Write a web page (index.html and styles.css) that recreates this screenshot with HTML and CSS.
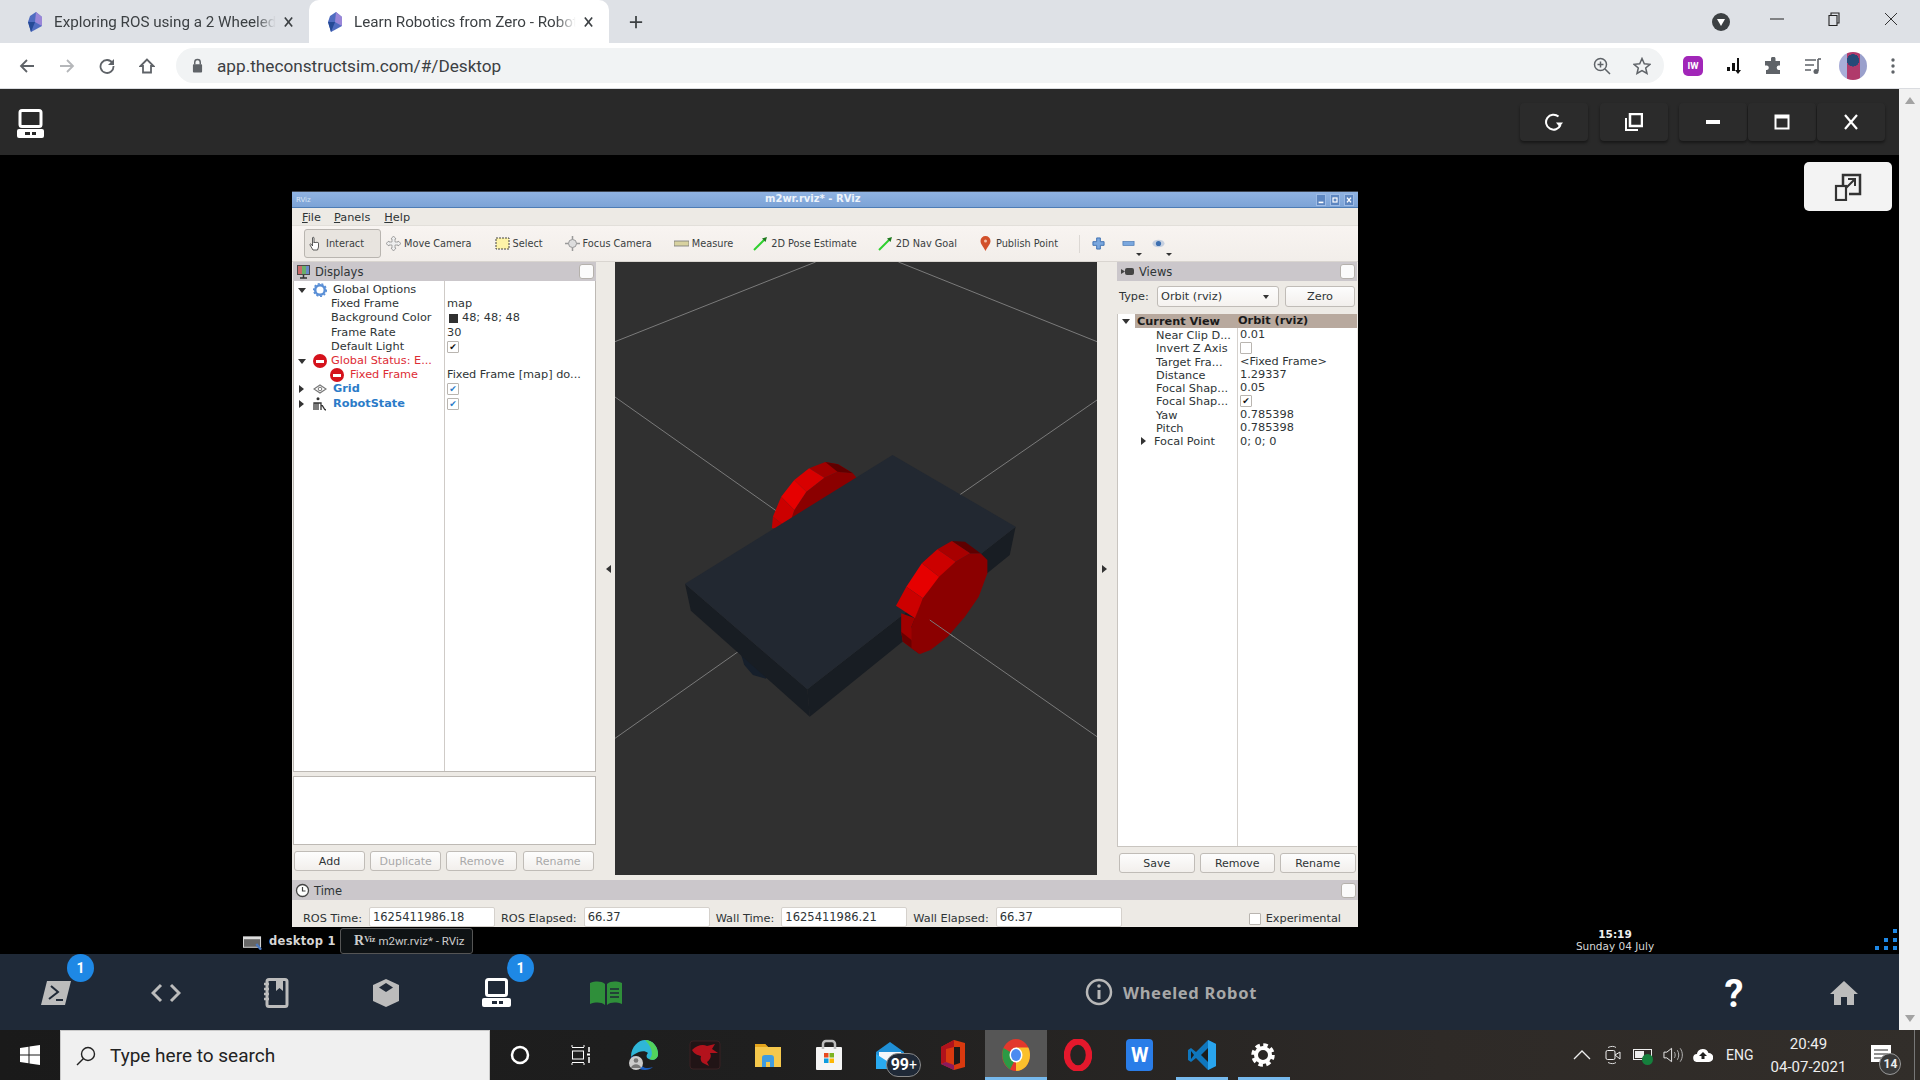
FILE: index.html
```html
<!DOCTYPE html>
<html lang="en">
<head>
<meta charset="utf-8">
<title>Learn Robotics from Zero</title>
<link rel="stylesheet" href="styles.css">
</head>
<body>
<div class="page">
  <header class="tabstrip">
    <div class="tab">
      <svg class="favicon" viewBox="0 0 20 20"><polygon points="11,0 17,5 17,14 6,20 3,10 5,4" fill="#4f6cc0"/><polygon points="11,0 17,5 17,14 10,10" fill="#9a86d8"/><polygon points="3,10 10,10 6,20" fill="#254a96"/></svg>
      <span class="tab-title">Exploring ROS using a 2 Wheeled</span>
      <svg class="tab-x" viewBox="0 0 12 12"><path d="M2 1l8 10M10 1L2 11" stroke="#3c4043" stroke-width="1.8" fill="none"/></svg>
    </div>
    <div class="tab tab-active">
      <svg class="favicon" viewBox="0 0 20 20"><polygon points="11,0 17,5 17,14 6,20 3,10 5,4" fill="#4f6cc0"/><polygon points="11,0 17,5 17,14 10,10" fill="#9a86d8"/><polygon points="3,10 10,10 6,20" fill="#254a96"/></svg>
      <span class="tab-title">Learn Robotics from Zero - Robot</span>
      <svg class="tab-x" viewBox="0 0 12 12"><path d="M2 1l8 10M10 1L2 11" stroke="#3c4043" stroke-width="1.8" fill="none"/></svg>
    </div>
    <svg class="newtab" viewBox="0 0 16 16"><path d="M8 1v14M1 8h14" stroke="#3c4043" stroke-width="2"/></svg>
    <div class="win-controls">
      <svg class="win-drop" viewBox="0 0 18 18"><circle cx="9" cy="9" r="9" fill="#3c4043"/><path d="M5 6h8l-4 7z" fill="#fff"/></svg>
      <svg class="win-btn win-min" viewBox="0 0 14 14"><path d="M0 7h14" stroke="#222" stroke-width="1"/></svg>
      <svg class="win-btn" viewBox="0 0 14 14"><path d="M3 3.5h8v10H3zM5 3.500V1h8v10h-2" stroke="#222" stroke-width="1.100" fill="none"/></svg>
      <svg class="win-btn" viewBox="0 0 14 14"><path d="M1 1l12 12M13 1L1 13" stroke="#333" stroke-width="1"/></svg>
    </div>
  </header>

  <nav class="navbar">
    <span class="nav-slot"><svg class="ic16" viewBox="0 0 16 16"><path d="M15 8H2M8 2L2 8l6 6" stroke="#5f6368" stroke-width="1.800" fill="none"/></svg></span>
    <span class="nav-slot"><svg class="ic16" viewBox="0 0 16 16"><path d="M1 8h13M8 2l6 6-6 6" stroke="#b5b7ba" stroke-width="1.800" fill="none"/></svg></span>
    <span class="nav-slot"><svg class="ic16" viewBox="0 0 16 16"><path d="M13.500 5A6.500 6.500 0 1 0 14.500 8" stroke="#5f6368" stroke-width="1.800" fill="none"/><path d="M15 1v6H9z" fill="#5f6368"/></svg></span>
    <span class="nav-slot"><svg class="ic16" viewBox="0 0 16 16"><path d="M8 1.500L1.500 8H4v6.500h8V8h2.500z" stroke="#5f6368" stroke-width="1.800" fill="none"/></svg></span>
    <div class="omnibox">
      <svg class="lock" viewBox="0 0 12 16"><path d="M3 7V4.500a3 3 0 0 1 6 0V7" stroke="#5f6368" stroke-width="1.600" fill="none"/><rect x="1" y="6.500" width="10" height="9" rx="1" fill="#5f6368"/></svg>
      <span class="url">app.theconstructsim.com/#/Desktop</span>
      <span class="nav-slot push"><svg class="ic18" viewBox="0 0 18 18"><circle cx="7.500" cy="7.500" r="6" stroke="#5f6368" stroke-width="1.500" fill="none"/><path d="M12 12l5 5M7.500 4.500v6M4.500 7.500h6" stroke="#5f6368" stroke-width="1.500"/></svg></span>
      <span class="nav-slot"><svg class="ic18" viewBox="0 0 18 18"><path d="M9 1.500l2.300 5.200 5.700.6-4.300 3.700 1.300 5.500L9 13.600l-5 2.900 1.300-5.500L1 7.300l5.700-.6z" stroke="#5f6368" stroke-width="1.500" fill="none"/></svg></span>
    </div>
    <div class="ext-group">
      <span class="nav-slot"><span class="iw">IW</span></span>
      <span class="nav-slot"><svg class="ic18" viewBox="0 0 18 18"><path d="M3 10h3v4H3zM8 6h3v8H8z" fill="#111"/><path d="M14 1v14" stroke="#111" stroke-width="2"/><path d="M11 13h6l-3 4z" fill="#111"/></svg></span>
      <span class="nav-slot"><svg class="ic18" viewBox="0 0 18 18"><path d="M7 1.500a2.300 2.300 0 0 1 4.500 0V4h4.500v4.500h-1.500a2.300 2.300 0 0 0 0 4.500H16v4H2v-4h1a2.300 2.300 0 0 0 0-4.500H1V4h6z" fill="#5f6368"/></svg></span>
      <span class="nav-slot"><svg class="ic18" viewBox="0 0 18 18"><path d="M1 3h11M1 8h9M1 13h6" stroke="#5f6368" stroke-width="1.600"/><path d="M14 2v12" stroke="#5f6368" stroke-width="1.600"/><path d="M14 2h3" stroke="#5f6368" stroke-width="1.600"/><circle cx="12" cy="14.500" r="2.500" fill="#5f6368"/></svg></span>
      <span class="nav-slot"><span class="avatar"></span></span>
      <span class="nav-slot"><svg class="ic18" viewBox="0 0 18 18"><circle cx="9" cy="3" r="1.700" fill="#5f6368"/><circle cx="9" cy="9" r="1.700" fill="#5f6368"/><circle cx="9" cy="15" r="1.700" fill="#5f6368"/></svg></span>
    </div>
  </nav>

  <div class="app">
    <div class="app-main">
      <div class="darkbar">
        <svg class="desk-logo" viewBox="0 0 29 29"><rect x="4" y="1.500" width="21" height="16" rx="2" stroke="#fff" stroke-width="3" fill="#292929"/><rect x="1" y="20" width="27" height="9" rx="2" fill="#fff"/><rect x="9" y="23" width="11" height="3" fill="#292929"/><path d="M14 23h2v3h-2z" fill="#fff"/></svg>
        <div class="wm-buttons">
          <button class="wm-btn wm-a"><svg class="ic18" viewBox="0 0 18 18"><path d="M13.500 3.500A7.500 7.500 0 1 0 15.500 12" stroke="#fff" stroke-width="2" fill="none"/><path d="M11 9.500h7l-3.500 4.500z" fill="#fff"/></svg></button>
          <button class="wm-btn wm-b"><svg class="ic18" viewBox="0 0 18 18"><path d="M1 5v12h12" stroke="#fff" stroke-width="2" fill="none"/><rect x="5" y="1" width="12" height="12" stroke="#fff" stroke-width="2.500" fill="none"/></svg></button>
          <button class="wm-btn wm-c"><svg class="ic18" viewBox="0 0 18 18"><rect x="2" y="7" width="14" height="4" fill="#fff"/></svg></button>
          <button class="wm-btn wm-d"><svg class="ic18" viewBox="0 0 18 18"><rect x="2.500" y="2.500" width="13" height="13" stroke="#fff" stroke-width="2" fill="none"/><rect x="2" y="2" width="14" height="3.500" fill="#fff"/></svg></button>
          <button class="wm-btn wm-d"><svg class="ic18" viewBox="0 0 18 18"><path d="M3 2l12 14M15 2L3 16" stroke="#fff" stroke-width="2.200"/></svg></button>
        </div>
      </div>

      <div class="desktop">
        <section class="rviz">
          <div class="rv-title">
            <span class="rv-title-ic">RViz</span>
            <span class="rv-title-text">m2wr.rviz* - RViz</span>
            <span class="rv-title-btns">
              <span class="rv-tbtn"><svg viewBox="0 0 10 12"><path d="M2 9h6" stroke="#fff" stroke-width="2"/></svg></span>
              <span class="rv-tbtn"><svg viewBox="0 0 10 12"><rect x="2.500" y="3.500" width="5" height="5" stroke="#fff" stroke-width="1.500" fill="none"/></svg></span>
              <span class="rv-tbtn"><svg viewBox="0 0 10 12"><path d="M2.500 3l5 6M7.500 3l-5 6" stroke="#fff" stroke-width="1.800"/></svg></span>
            </span>
          </div>
          <div class="rv-menu">
            <span class="rv-m1"><u>F</u>ile</span><span class="rv-m2"><u>P</u>anels</span><span class="rv-m3"><u>H</u>elp</span>
          </div>
          <div class="rv-tools">
            <span class="tool tool-on"><svg class="t-ic" viewBox="0 0 15 15"><path d="M5 14L2 9c-.5-1 1-1.500 1.500-.5L4.500 10V2c0-1 1.500-1 1.500 0v5c0-1 1.500-1 1.500 0 0-1 1.500-1 1.500 0 0-.8 1.500-.8 1.500.2V11l-1 3z" fill="#fff" stroke="#333" stroke-width=".8"/></svg>Interact</span>
            <span class="tool t-move"><svg class="t-ic" viewBox="0 0 15 15"><path d="M7.500 0l2.500 3H9v3h3V5l3 2.500L12 10V9H9v3h1l-2.500 3L5 12h1V9H3v1L0 7.500 3 5v1h3V3H5z" fill="#eee" stroke="#888" stroke-width=".7"/></svg>Move Camera</span>
            <span class="tool t-select"><svg class="t-ic" viewBox="0 0 15 15"><rect x="1" y="2" width="13" height="11" fill="#fdf3a8" stroke="#444" stroke-width="1" stroke-dasharray="2 1"/></svg>Select</span>
            <span class="tool t-focus"><svg class="t-ic" viewBox="0 0 15 15"><path d="M7.500 0v15M0 7.500h15" stroke="#999" stroke-width="1.500"/><circle cx="7.500" cy="7.500" r="4" fill="#ddd" stroke="#999"/></svg>Focus Camera</span>
            <span class="tool t-measure"><svg class="t-ic" viewBox="0 0 15 15"><rect x="0" y="5" width="15" height="5" fill="#d8d2a0" stroke="#777" stroke-width=".8"/></svg>Measure</span>
            <span class="tool t-pose"><svg class="t-ic" viewBox="0 0 15 15"><path d="M1 14L11 4" stroke="#2fd02f" stroke-width="2"/><path d="M14 1l-5 1.500L12.500 6z" fill="#1d7a1d"/></svg>2D Pose Estimate</span>
            <span class="tool t-nav"><svg class="t-ic" viewBox="0 0 15 15"><path d="M1 14L11 4" stroke="#2fd02f" stroke-width="2"/><path d="M14 1l-5 1.500L12.500 6z" fill="#1d7a1d"/></svg>2D Nav Goal</span>
            <span class="tool t-pub"><svg class="t-ic" viewBox="0 0 15 15"><path d="M7.500 15C5 10 2.500 8 2.500 5a5 5 0 0 1 10 0c0 3-2.500 5-5 10z" fill="#d2502a"/><circle cx="7.500" cy="5" r="1.500" fill="#f3c0a8"/></svg>Publish Point</span>
            <span class="tool-sep"></span>
            <svg class="t-plus" viewBox="0 0 14 14"><path d="M5 1h4v4h4v4H9v4H5V9H1V5h4z" fill="#7aa7de" stroke="#3d6fb0"/></svg>
            <span class="t-drop"><svg class="t-minus" viewBox="0 0 14 14"><rect x="1" y="5" width="12" height="4" fill="#7aa7de" stroke="#3d6fb0" stroke-width=".7"/></svg><i class="caret"></i></span>
            <span class="t-drop"><svg class="t-eye" viewBox="0 0 14 14"><ellipse cx="7" cy="7" rx="6.500" ry="4" fill="#c6d0e0"/><circle cx="7" cy="7" r="2.800" fill="#3d6fb0"/></svg><i class="caret"></i></span>
          </div>

          <div class="rv-main">
            <div class="rv-left">
              <div class="dock-head">
                <svg class="head-ic" viewBox="0 0 15 15"><rect x="1" y="1" width="13" height="10" fill="#4a4a4a"/><rect x="2" y="2" width="4" height="8" fill="#c86a6a"/><rect x="6" y="2" width="4" height="8" fill="#6ab06a"/><rect x="10" y="2" width="3" height="8" fill="#6a8ac8"/><path d="M4 14h7M7.500 11v3" stroke="#333" stroke-width="1.500"/></svg>
                <span>Displays</span>
                <span class="float-btn"></span>
              </div>
              <div class="tree">
                <div class="row"><div class="name"><i class="arr-d"></i><svg class="tree-ic" viewBox="0 0 14 14"><circle cx="7" cy="7" r="4.800" fill="none" stroke="#5a8fd6" stroke-width="2.500"/><circle cx="7" cy="7" r="6.300" fill="none" stroke="#5a8fd6" stroke-width="1.500" stroke-dasharray="2 1.800"/></svg><span class="lab-g">Global Options</span></div><div class="val"></div></div>
                <div class="row"><div class="name child">Fixed Frame</div><div class="val">map</div></div>
                <div class="row"><div class="name child">Background Color</div><div class="val"><i class="swatch"></i>48; 48; 48</div></div>
                <div class="row"><div class="name child">Frame Rate</div><div class="val">30</div></div>
                <div class="row"><div class="name child">Default Light</div><div class="val"><span class="cb">✔</span></div></div>
                <div class="row err"><div class="name"><i class="arr-d"></i><span class="stop s-top"></span><span class="lab-g">Global Status: E...</span></div><div class="val"></div></div>
                <div class="row err"><div class="name child2"><span class="stop s-sub"></span><span>Fixed Frame</span></div><div class="val dark">Fixed Frame [map] do...</div></div>
                <div class="row"><div class="name"><i class="arr-r"></i><svg class="tree-ic" viewBox="0 0 14 14"><path d="M7 3l6 4-6 4-6-4z" fill="none" stroke="#777" stroke-width="1.200"/><circle cx="7" cy="7" r="1.800" fill="none" stroke="#777"/></svg><b class="lab-g blue">Grid</b></div><div class="val"><span class="cb cb-blue">✔</span></div></div>
                <div class="row"><div class="name"><i class="arr-r"></i><svg class="tree-ic" viewBox="0 0 14 14"><circle cx="5" cy="1.800" r="1.500" fill="#333"/><path d="M1 13V6h7v7M3 6v7M5 6v7M8 8c3 0 2 5 5 5" stroke="#333" stroke-width="1.300" fill="none"/></svg><b class="lab-g blue">RobotState</b></div><div class="val"><span class="cb cb-blue">✔</span></div></div>
              </div>
              <div class="desc"></div>
              <div class="btn-row">
                <button class="qbtn">Add</button><button class="qbtn off">Duplicate</button><button class="qbtn off">Remove</button><button class="qbtn off">Rename</button>
              </div>
            </div>
            <div class="sash"><i class="sash-l"></i></div>
            <div class="viewport">
              <svg class="scene" viewBox="45 -414 1398 1839" preserveAspectRatio="none">
                <g class="grid-lines">
                  <line x1="45" y1="-175" x2="627" y2="-414"/><line x1="867" y1="-414" x2="1443" y2="-175"/>
                  <line x1="45" y1="-9" x2="512" y2="332"/><line x1="1040" y1="288" x2="1443" y2="0"/>
                  <line x1="45" y1="1015" x2="420" y2="742"/><line x1="958" y1="660" x2="1443" y2="1010"/>
                </g>
                <polygon points="408,755 420,795 445,825 482,836 505,815" fill="#161f2b"/>
                <polygon points="757,248 735,220 690,215 652,233 600,275 565,330 547,387" fill="#8b0000"/>
                <polygon points="655,186 692,193 735,220 690,215 652,233 608,205" fill="#a00000"/>
                <polygon points="655,186 692,193 735,220 690,215" fill="#5e0000"/>
                <polygon points="608,205 652,233 600,275 565,240" fill="#d80000"/>
                <polygon points="565,240 600,275 565,330 527,290" fill="#e60000"/>
                <polygon points="527,290 565,330 547,387 503,350" fill="#cc0000"/>
                <polygon points="503,350 547,387 500,385" fill="#c00000"/>
                <polygon points="248,551 603,868 610,950 265,632" fill="#181d23"/>
                <polygon points="603,868 1207,380 1190,465 610,950" fill="#181d23"/>
                <polygon points="850,165 1207,380 603,868 248,551" fill="#222831"/>
                <polygon points="905,680 915,655 875,640 875,695 880,725 928,762" fill="#a00000"/>
                <polygon points="875,695 905,720 928,762 880,725" fill="#6b0000"/>
                <polygon points="1105,460 1125,480 1125,520 1100,590 1060,650 1010,710 960,750 930,762 905,745 905,680 930,610 975,535 1033,485 1075,460" fill="#8b0000"/>
                <polygon points="1022,423 1060,425 1105,460 1075,460" fill="#5e0000"/>
                <polygon points="980,448 1022,423 1075,460 1033,485" fill="#a80000"/>
                <polygon points="935,490 980,448 1033,485 985,530" fill="#cc0000"/>
                <polygon points="890,560 935,490 985,530 938,595" fill="#e60000"/>
                <polygon points="860,617 890,560 938,595 915,655" fill="#cc0000"/>
                <line class="grid-over" x1="958" y1="660" x2="1030" y2="712"/>
              </svg>
            </div>
            <div class="sash sash-r"><i class="sash-a"></i></div>
            <div class="rv-right">
              <div class="dock-head">
                <svg class="head-ic" viewBox="0 0 15 15"><path d="M1 5l4 2.500L1 10z" fill="#444"/><rect x="5" y="4" width="9" height="7" rx="2" fill="#444"/></svg>
                <span>Views</span>
                <span class="float-btn"></span>
              </div>
              <div class="type-row">
                <span class="type-lab">Type:</span>
                <span class="combo"><span>Orbit (rviz)</span><i class="combo-arr"></i></span>
                <button class="qbtn zero">Zero</button>
              </div>
              <div class="vtable">
                <div class="vhead"><i class="arr-d v-arr"></i><div class="vhead-band"><b class="vname">Current View</b><b class="vval">Orbit (rviz)</b></div></div>
                <div class="vrow"><div class="vname">Near Clip D...</div><div class="vval">0.01</div></div>
                <div class="vrow"><div class="vname">Invert Z Axis</div><div class="vval"><span class="cb"></span></div></div>
                <div class="vrow"><div class="vname">Target Fra...</div><div class="vval">&lt;Fixed Frame&gt;</div></div>
                <div class="vrow"><div class="vname">Distance</div><div class="vval">1.29337</div></div>
                <div class="vrow"><div class="vname">Focal Shap...</div><div class="vval">0.05</div></div>
                <div class="vrow"><div class="vname">Focal Shap...</div><div class="vval"><span class="cb">✔</span></div></div>
                <div class="vrow"><div class="vname">Yaw</div><div class="vval">0.785398</div></div>
                <div class="vrow"><div class="vname">Pitch</div><div class="vval">0.785398</div></div>
                <div class="vrow"><div class="vname vfp"><i class="arr-r"></i>Focal Point</div><div class="vval">0; 0; 0</div></div>
              </div>
              <div class="btn-row btn-row-r">
                <button class="qbtn">Save</button><button class="qbtn">Remove</button><button class="qbtn">Rename</button>
              </div>
            </div>
          </div>

          <div class="time-head">
            <svg class="head-ic" viewBox="0 0 15 15"><circle cx="7.500" cy="7.500" r="6" fill="#fff" stroke="#444" stroke-width="1.300"/><path d="M7.500 4v4h3" stroke="#444" stroke-width="1.200" fill="none"/></svg>
            <span>Time</span>
            <span class="float-btn"></span>
          </div>
          <div class="time-row">
            <span class="t-lab">ROS Time:</span><span class="t-field">1625411986.18</span>
            <span class="t-lab">ROS Elapsed:</span><span class="t-field">66.37</span>
            <span class="t-lab">Wall Time:</span><span class="t-field">1625411986.21</span>
            <span class="t-lab">Wall Elapsed:</span><span class="t-field">66.37</span>
            <span class="t-exp"><span class="cb cb-plain"></span>Experimental</span>
          </div>
        </section>

        <button class="detach"><svg viewBox="0 0 28 28"><path d="M9 13V2h17v19H15" stroke="#333" stroke-width="2.500" fill="none"/><rect x="2" y="13" width="10" height="14" stroke="#333" stroke-width="2.200" fill="#f3f3f3"/><path d="M12 15l9-9M14 6h7v7" stroke="#333" stroke-width="2" fill="none"/></svg></button>

        <div class="x-task">
          <svg class="x-ic" viewBox="0 0 20 14"><rect x="0" y="0" width="19" height="12" fill="#ddd"/><rect x="1" y="3" width="17" height="8" fill="#666"/><path d="M14 8l5 6" stroke="#4a78c0" stroke-width="2.500"/></svg>
          <span class="x-desk">desktop 1</span>
          <span class="x-win"><span class="x-logo">R<small>Viz</small></span><span class="x-name">m2wr.rviz* - RViz</span></span>
        </div>
        <div class="x-clock"><b>15:19</b><span>Sunday 04 July</span></div>
        <div class="x-dots"><i></i><i></i><i></i><i></i><i></i><i></i></div>
      </div>

      <div class="dock">
        <div class="dock-apps">
          <span class="dock-slot"><svg class="d-term" viewBox="0 0 30 24"><path d="M6 0h24l-6 24H0z" fill="#bcbcbc"/><path d="M10 5l7 6-9 7M15 19h7" stroke="#1f2937" stroke-width="2" fill="none"/></svg><span class="badge">1</span></span>
          <span class="dock-slot"><svg class="d-code" viewBox="0 0 30 20"><path d="M10 2L2 10l8 8M20 2l8 8-8 8" stroke="#bcbcbc" stroke-width="3" fill="none"/></svg></span>
          <span class="dock-slot"><svg class="d-note" viewBox="0 0 26 30"><rect x="4" y="1.500" width="20" height="27" rx="2" stroke="#bcbcbc" stroke-width="3" fill="none"/><path d="M13 2h7v11l-3.500-3-3.500 3z" fill="#bcbcbc"/><path d="M1 6h5M1 11h5M1 16h5M1 21h5" stroke="#bcbcbc" stroke-width="2.500"/></svg></span>
          <span class="dock-slot"><svg class="d-cube" viewBox="0 0 26 28"><path d="M13 0l13 6v16l-13 6-13-6V6z" fill="#bcbcbc"/><path d="M13 4l7 4.500-7 4.500-7-4.500z" fill="#1f2937"/></svg></span>
          <span class="dock-slot"><svg class="d-desk" viewBox="0 0 29 29"><rect x="4.500" y="1.500" width="20" height="16" rx="2" stroke="#fff" stroke-width="3" fill="none"/><rect x="0" y="20" width="29" height="9" rx="2" fill="#fff"/><rect x="10" y="23" width="11" height="3" fill="#1f2937"/><path d="M15 23h2v3h-2z" fill="#fff"/></svg><span class="badge">1</span></span>
          <span class="dock-slot"><svg class="d-book" viewBox="0 0 32 24"><path d="M0 2c6-2 11-2 15 1v21C11 21 6 21 0 23zM32 2c-6-2-11-2-15 1v21c4-3 9-3 15-1z" fill="#2f8f3a"/><path d="M20 8h9M20 12h9M20 16h9" stroke="#1f2937" stroke-width="1.500"/></svg></span>
        </div>
        <div class="dock-label">
          <svg class="d-info" viewBox="0 0 28 28"><circle cx="14" cy="14" r="12" stroke="#b8b8b8" stroke-width="2.500" fill="none"/><path d="M14 12v9" stroke="#b8b8b8" stroke-width="3"/><circle cx="14" cy="8" r="1.800" fill="#b8b8b8"/></svg>
          <span>Wheeled Robot</span>
        </div>
        <div class="dock-right">
          <span class="dock-slot help">?</span>
          <span class="dock-slot"><svg class="d-home" viewBox="0 0 28 24"><path d="M14 0L0 13h4v11h7v-8h6v8h7V13h4z" fill="#bcbcbc"/></svg></span>
        </div>
      </div>
    </div>
    <aside class="vscroll"><i class="sc-up"></i><i class="sc-down"></i></aside>
  </div>

  <footer class="taskbar">
    <span class="start"><svg class="ic20" viewBox="0 0 20 20"><path d="M0 3l8.500-1.300V9.500H0zM9.500 1.500L20 0v9.500H9.500zM0 10.500h8.500v7.800L0 17zM9.500 10.500H20V20L9.500 18.500z" fill="#fff"/></svg></span>
    <div class="search">
      <svg class="s-ic" viewBox="0 0 20 20"><circle cx="12" cy="8" r="6.500" stroke="#222" stroke-width="1.400" fill="none"/><path d="M7.500 12.500L1 19" stroke="#222" stroke-width="1.400"/></svg>
      <span>Type here to search</span>
    </div>
    <div class="tb-apps">
      <span class="tb-slot"><svg class="ic20" viewBox="0 0 20 20"><circle cx="10" cy="10" r="8" stroke="#fff" stroke-width="2.500" fill="none"/></svg></span>
      <span class="tb-slot"><svg class="ic20 tv" viewBox="0 0 20 20"><path d="M1 2.500h12M1 17.500h12M13 20v-2M1 20v-2M13 0v2M1 0v2" stroke="#fff" stroke-width="1"/><rect x="1.500" y="6" width="11" height="8" stroke="#fff" fill="none"/><path d="M18 2v5M18 12v6" stroke="#fff" stroke-width="1.500"/><rect x="16" y="8.500" width="3" height="2" fill="#fff"/></svg></span>
      <span class="tb-slot"><svg class="ic32 edge" viewBox="0 0 32 32"><path d="M4 18C4 7 12 1 18 1c8 0 13 7 13 14 0 5-5 7-9 5-3-1-3-4-1-6-3-3-9-2-13 1-2 1-3 2-4 3z" fill="#2fb6d8"/><path d="M18 1c8 0 13 7 13 14 0 5-5 7-9 5 4-2 5-10-4-19z" fill="#52d35c"/><path d="M4 18c0 8 7 13 14 13 3 0 6-1 8-3-7 3-15 0-14-10-3-1-6-1-8 0z" fill="#1b5fc4"/><circle cx="9" cy="24" r="7" fill="#ccc"/><circle cx="9" cy="21.500" r="2.300" fill="#777"/><path d="M4 29c1-5 9-5 10 0z" fill="#777"/></svg></span>
      <span class="tb-slot"><svg class="ic32 edge" viewBox="0 0 32 32"><rect x="1" y="2" width="30" height="28" rx="3" fill="#211416" stroke="#3a2022"/><path d="M3 11c5-5 11-6 15-4l8-2-3 5 6 4-8 0c2 3 0 7-3 9l2 4-6-3c-2-1-3-4-2-7-3-1-6-1-9-6z" fill="#b3121c"/></svg></span>
      <span class="tb-slot"><svg class="ic28" viewBox="0 0 28 28"><path d="M1 3h10l3 3h13v20H1z" fill="#f5c84c"/><path d="M1 3h10l3 3H1z" fill="#e3a41c"/><path d="M8 26V17c0-2 1-3 3-3h6c2 0 3 1 3 3v9h-4v-5h-4v5z" fill="#3f9ce0"/></svg></span>
      <span class="tb-slot"><svg class="ic32" viewBox="0 0 32 32"><rect x="3" y="8" width="26" height="23" rx="1" fill="#f5f5f5"/><path d="M10 10V5a3 3 0 0 1 3-3h6a3 3 0 0 1 3 3v5" stroke="#bdbdbd" stroke-width="2.500" fill="none"/><rect x="11" y="14" width="4.500" height="4.500" fill="#e8491e"/><rect x="16.500" y="14" width="4.500" height="4.500" fill="#7db320"/><rect x="11" y="19.500" width="4.500" height="4.500" fill="#0c9ce0"/><rect x="16.500" y="19.500" width="4.500" height="4.500" fill="#fdb705"/></svg></span>
      <span class="tb-slot"><svg class="ic32" viewBox="0 0 32 32"><path d="M1 13L15 3l14 10v15H1z" fill="#1f8fd6"/><path d="M4 13h22v8l-11 6-11-6z" fill="#f2f6fa"/><path d="M1 15l14 9 14-9v15H1z" fill="#29aaf0"/></svg><span class="mail-count">99<small>+</small></span></span>
      <span class="tb-slot"><svg class="ic24" viewBox="0 0 24 30"><path d="M13 0l11 3v24l-11 3L0 24V7z" fill="#d8390f"/><path d="M13 0L0 7v17l5-2V9l8-2z" fill="#b0121c"/><path d="M0 24l13 6v-5l-8-3z" fill="#8c1a5c"/><path d="M13 7v18l6-2V7z" fill="#1c1a18"/></svg></span>
      <span class="tb-slot tb-active"><svg class="ic28" viewBox="0 0 28 32"><ellipse cx="14" cy="16" rx="14" ry="16" fill="#e2382c"/><path d="M14 32c8 0 14-7 14-16 0-3-.6-5-1.700-7.500H14z" fill="#fbc02d"/><path d="M1.500 9C-1 15 0 25 8 30.500L15 17z" fill="#2c9a45"/><ellipse cx="14" cy="16" rx="6.500" ry="7.500" fill="#fff"/><ellipse cx="14" cy="16" rx="5" ry="6" fill="#4c8bf0"/></svg></span>
      <span class="tb-slot"><svg class="ic28" viewBox="0 0 28 32"><ellipse cx="14" cy="16" rx="11" ry="13.500" stroke="#e4182c" stroke-width="6.500" fill="none"/></svg></span>
      <span class="tb-slot"><span class="wps">W</span></span>
      <span class="tb-slot tb-run"><svg class="ic28" viewBox="0 0 28 32"><path d="M20 1l8 4v22l-8 4L8 19l-5 4-3-2v-10l3-2 5 4z" fill="#0f76bd"/><path d="M20 1l8 4v22l-8 4z" fill="#29a4ee"/><path d="M20 9l-7 7 7 7z" fill="#1c1c1c"/><path d="M3 12l3 4-3 4z" fill="#1c1c1c"/></svg></span>
      <span class="tb-slot tb-run"><svg class="ic24 gear" viewBox="0 0 24 24"><circle cx="12" cy="12" r="7" stroke="#fff" stroke-width="4" fill="none"/><circle cx="12" cy="12" r="10" stroke="#fff" stroke-width="3.500" stroke-dasharray="4.500 3.350" fill="none"/></svg></span>
    </div>
    <div class="tray">
      <svg class="tr-chev" viewBox="0 0 18 10"><path d="M1 9l8-8 8 8" stroke="#eee" stroke-width="1.300" fill="none"/></svg>
      <svg class="tr-cam" viewBox="0 0 16 20"><path d="M3 2.500c3-1.500 6-1.500 8 0M3 17.500c3 1.500 6 1.500 8 0" stroke="#ddd" fill="none"/><rect x="1" y="5.500" width="9" height="9" rx="1.500" stroke="#eee" fill="none"/><path d="M10 10l5-3v7z" stroke="#eee" fill="none"/></svg>
      <span class="tr-bat"><svg viewBox="0 0 20 12"><rect x=".5" y=".5" width="18" height="10" stroke="#eee" fill="none"/><rect x="2" y="2" width="9" height="7" fill="#eee"/></svg><i></i></span>
      <svg class="tr-vol" viewBox="0 0 22 16"><path d="M1 5h3l5-4v14l-5-4H1z" stroke="#eee" fill="none"/><path d="M12 5c1 2 1 4 0 6M15 3c2 3 2 7 0 10M18 1c3 4 3 10 0 14" stroke="#bbb" fill="none"/></svg>
      <svg class="tr-cloud" viewBox="0 0 20 14"><path d="M4.500 14a4 4 0 0 1-.6-8A6 6 0 0 1 15.500 5 4.500 4.500 0 0 1 16 14z" fill="#fff"/><path d="M10 4l4 4h-2.500v3h-3V8H6z" fill="#1f1f1f"/></svg>
      <span class="tr-eng">ENG</span>
      <span class="tr-time"><span>20:49</span><span>04-07-2021</span></span>
      <span class="tr-note"><svg viewBox="0 0 20 17"><path d="M0 0h20v17H0z" fill="#fff"/><path d="M3 5h14M3 9h14M3 13h10" stroke="#222"/></svg><b>14</b></span>
    </div>
    <i class="show-desk"></i>
  </footer>
</div>
</body>
</html>
```

FILE: styles.css
```css
* { box-sizing: border-box; }
html, body { margin: 0; height: 100%; overflow: hidden; }
body { font-family: "Noto Sans", "Open Sans", sans-serif; background: #000; }
svg { display: block; flex: none; }
button { font: inherit; margin: 0; }
i { display: block; }
.page { width: 1920px; height: 1080px; display: flex; flex-direction: column; }

.ic16 { width: 16px; height: 16px; }
.ic18 { width: 18px; height: 18px; }
.ic20 { width: 20px; height: 20px; }
.ic24 { width: 24px; height: 30px; }
.ic28 { width: 28px; height: 32px; }
.ic32 { width: 32px; height: 32px; }

/* Browser chrome */
.tabstrip { height: 43px; background: #dee1e6; display: flex; align-items: center; padding-left: 9px; flex: none; }
.tab { width: 300px; height: 43px; display: flex; align-items: center; padding-left: 16px; font: 15.2px "Roboto", sans-serif; color: #3c4043; }
.tab-active { background: #fff; border-radius: 10px 10px 0 0; color: #3c4043; }
.favicon { width: 20px; height: 20px; margin-right: 9px; }
.tab-title { width: 224px; white-space: nowrap; -webkit-mask-image: linear-gradient(90deg, #000 90%, transparent 99%); mask-image: linear-gradient(90deg, #000 90%, transparent 99%); }
.tab-x { width: 11px; height: 12px; margin-left: 5px; }
.newtab { width: 14px; height: 14px; margin-left: 20px; }
.win-controls { margin-left: auto; display: flex; align-items: center; }
.win-drop { width: 18px; height: 18px; margin-right: 40px; }
.win-btn { width: 14px; height: 14px; margin-right: 44px; margin-top: -6px; }
.win-min { margin-right: 42px; }
.win-btn:last-child { margin-right: 22px; }

.navbar { height: 46px; background: #fff; border-bottom: 1px solid #dadce0; display: flex; align-items: flex-start; padding: 5px 0 0 7px; flex: none; }
.nav-slot { width: 40px; height: 35px; display: flex; align-items: center; justify-content: center; flex: none; }
.omnibox { width: 1488px; height: 35px; margin-left: 9px; background: #f1f3f4; border-radius: 18px; display: flex; align-items: center; padding: 0 2px 0 16px; }
.lock { width: 11px; height: 15px; margin-right: 14px; }
.url { font: 17.2px "Roboto", sans-serif; color: #3c4043; }
.push { margin-left: auto; }
.ext-group { display: flex; margin-left: 9px; }
.iw { width: 20px; height: 20px; border-radius: 5px; background: #a126b8; color: #fff; font: 700 9.5px/20px "Roboto", sans-serif; text-align: center; }
.avatar { width: 28px; height: 28px; border-radius: 50%; background: radial-gradient(circle at 50% 30%, #274a78 0 25%, transparent 26%), linear-gradient(90deg, #a9aed8 0 30%, #b03a6b 30% 75%, #9aa0cc 75%); }

/* App shell */
.app { height: 941px; display: flex; flex: none; }
.app-main { width: 1899px; display: flex; flex-direction: column; }
.vscroll { width: 21px; background: #f1f1f1; display: flex; flex-direction: column; justify-content: space-between; padding: 8px 0 8px 6px; }
.sc-up { width: 0; height: 0; border: 5px solid transparent; border-top: 0; border-bottom: 7px solid #a3a3a3; }
.sc-down { width: 0; height: 0; border: 5px solid transparent; border-bottom: 0; border-top: 7px solid #a3a3a3; }

.darkbar { height: 66px; background: #292929; display: flex; align-items: center; padding-left: 16px; flex: none; }
.desk-logo { width: 29px; height: 29px; margin-top: 3px; }
.wm-buttons { margin-left: auto; display: flex; padding-right: 14px; align-self: flex-start; margin-top: 14px; }
.wm-btn { width: 68px; height: 38px; border: 0; background: #2b2b2b; border-radius: 4px; box-shadow: 0 2px 3px rgba(0,0,0,.45); display: flex; align-items: center; justify-content: center; padding: 0; }
.wm-a { margin-right: 12px; } .wm-b { margin-right: 11px; } .wm-c, .wm-d { margin-right: 1px; }
.wm-d:last-child { margin-right: 0; }

.desktop { height: 799px; background: #000; position: relative; flex: none; }

/* RViz */
.rviz { position: absolute; left: 292px; top: 36px; width: 1066px; height: 736px; background: #edeae5; font: 11.3px "DejaVu Sans", sans-serif; color: #2e3436; display: flex; flex-direction: column; }
.rv-title { height: 17px; background: linear-gradient(#90b3e2, #7ca3d6); border-top: 1px solid #3d4450; border-bottom: 1px solid #4d7cb5; display: flex; align-items: center; position: relative; flex: none; }
.rv-title-ic { font-size: 7px; color: #dce7f5; margin-left: 4px; }
.rv-title-text { position: absolute; left: 473px; top: 0; font: 700 10px/14px "DejaVu Sans", sans-serif; color: #eef3fa; }
.rv-title-btns { margin-left: auto; display: flex; gap: 4px; padding-right: 4px; }
.rv-tbtn { width: 10px; height: 12px; background: #5d86c0; border: 1px solid #9dbbe5; display: block; }
.rv-tbtn svg { width: 8px; height: 10px; }
.rv-menu { height: 18px; display: flex; align-items: center; flex: none; border-bottom: 1px solid #e2dfda; padding-top: 1px; }
.rv-m1 { margin-left: 10px; } .rv-m2 { margin-left: 13px; } .rv-m3 { margin-left: 14px; }
.rv-tools { height: 36px; background: linear-gradient(#f8f4f1, #f2eeea); border-bottom: 1px solid #d9d5d0; display: flex; align-items: center; flex: none; padding-left: 12px; font-size: 9.75px; }
.tool { display: flex; align-items: center; white-space: nowrap; color: #3a3f41; }
.t-ic { width: 15px; height: 15px; margin-right: 3px; }
.tool-on { width: 77px; height: 29px; background: #e8e4df; border: 1px solid #b9b5b0; border-radius: 3px; padding-left: 3px; }
.t-move { margin-left: 5px; } .t-select { margin-left: 23px; } .t-focus { margin-left: 22px; } .t-measure { margin-left: 22px; }
.t-pose { margin-left: 20px; } .t-nav { margin-left: 21px; } .t-pub { margin-left: 21px; }
.tool-sep { width: 1px; height: 18px; background: #dcd8d4; margin-left: 21px; }
.t-plus { width: 13px; height: 13px; margin-left: 12px; }
.t-drop { position: relative; display: block; margin-left: 17px; }
.t-minus, .t-eye { width: 13px; height: 13px; }
.caret { position: absolute; right: -7px; bottom: -6px; width: 0; height: 0; border: 3px solid transparent; border-top: 3px solid #333; border-bottom: 0; }

.rv-main { height: 618px; display: flex; padding-left: 1px; flex: none; }
.rv-left { width: 303px; display: flex; flex-direction: column; }
.rv-right { width: 240px; display: flex; flex-direction: column; }
.sash { width: 19px; display: flex; align-items: center; padding-left: 8px; }
.sash-r { width: 20px; padding-left: 5px; }
.sash-l { width: 0; height: 0; border: 4px solid transparent; border-left: 0; border-right: 5px solid #333; margin-bottom: 5px; margin-left: 2px; }
.sash-a { width: 0; height: 0; border: 4px solid transparent; border-right: 0; border-left: 5px solid #333; margin-bottom: 5px; margin-left: 0; }
.viewport { width: 482px; height: 613px; background: #303030; }
.scene { width: 482px; height: 613px; }
.grid-lines line, .grid-over { stroke: #7a7a7a; stroke-width: 1px; vector-effect: non-scaling-stroke; }

.dock-head { height: 19px; background: #cbc7cb; display: flex; align-items: center; padding-left: 3px; font-size: 11.5px; flex: none; }
.head-ic { width: 15px; height: 15px; margin-right: 4px; }
.float-btn { width: 15px; height: 15px; margin-left: auto; margin-right: 2px; background: #fbfbfb; border: 1px solid #b5b1ac; border-radius: 3px; }

.tree { height: 491px; background: #fff linear-gradient(#cfcbc7, #cfcbc7) 150px 0 / 1px 100% no-repeat; border: 1px solid #bdb9b4; border-top: 0; flex: none; padding-top: 2px; }
.row { display: grid; grid-template-columns: 151px 1fr; height: 14.2px; line-height: 14.2px; white-space: nowrap; }
.name { display: flex; align-items: center; padding-left: 4px; }
.child { padding-left: 37px; }
.child2 { padding-left: 37px; }
.val { padding-left: 2px; display: flex; align-items: center; }
.arr-d { width: 0; height: 0; border: 4px solid transparent; border-top: 5px solid #333; border-bottom: 0; }
.arr-r { width: 0; height: 0; border: 4px solid transparent; border-left: 5px solid #333; border-right: 0; margin: 0 3px 0 1px; }
.tree-ic { width: 14px; height: 14px; margin-left: 7px; }
.lab-g { margin-left: 6px; }
.arr-r + .tree-ic { margin-left: 6px; }
.blue { color: #2b7bc8; }
.err { color: #dd2c35; }
.dark { color: #2e3436; }
.swatch { width: 9px; height: 9px; background: #303030; margin-right: 4px; margin-left: 2px; }
.stop { width: 14px; height: 14px; border-radius: 50%; background: #d5121c; position: relative; flex: none; display: block; }
.stop::after { content: ""; position: absolute; left: 3px; right: 3px; top: 5.5px; height: 3px; background: #fff; }
.s-top { margin-left: 7px; margin-right: -2px; }
.s-sub { margin-right: 6px; margin-left: -1px; }
.cb { width: 12px; height: 12px; border: 1px solid #b9b5b0; background: #fff; display: block; font: 700 9px/10px "DejaVu Sans", sans-serif; text-align: center; color: #111; border-radius: 1px; }
.cb-blue { color: #2b7bc8; }
.desc { height: 69px; margin-top: 4px; background: #fff; border: 1px solid #bdb9b4; flex: none; }
.btn-row { display: flex; margin-top: 6px; padding-left: 1px; gap: 5.2px; }
.btn-row .qbtn { width: 71px; }
.btn-row-r { gap: 5px; margin-top: 6px; padding-left: 2px; }
.btn-row-r .qbtn { width: 75.500px; }
.qbtn { height: 20px; background: linear-gradient(#fdfdfd, #f2efec); border: 1px solid #c0bcb7; border-radius: 3px; padding: 0; font: 11px "DejaVu Sans", sans-serif; color: #2e3436; }
.off { color: #a9a9a9; }

.type-row { display: flex; align-items: center; height: 21px; margin-top: 5px; flex: none; padding-left: 2px; }
.type-lab { width: 38px; }
.combo { width: 122px; height: 21px; background: linear-gradient(#fdfdfd, #f5f2ef); border: 1px solid #c0bcb7; border-radius: 3px; display: flex; align-items: center; justify-content: space-between; padding: 0 9px 0 3px; }
.combo-arr { width: 0; height: 0; border: 3.500px solid transparent; border-top: 4px solid #333; border-bottom: 0; }
.qbtn.zero { width: 70px; height: 21px; margin-left: 6px; font-size: 11.300px; }
.vtable { height: 533px; margin-top: 7px; background: #fff linear-gradient(#d5d1cd, #d5d1cd) 119px 0 / 1px 100% no-repeat; border: 1px solid #c9c5c0; border-top: 0; border-right: 0; flex: none; white-space: nowrap; }
.vhead { height: 14px; display: flex; align-items: center; padding-left: 4px; }
.v-arr { margin-right: 5px; }
.vhead-band { background: #b8a99e; height: 14px; line-height: 15.500px; display: flex; flex: 1; padding-left: 2px; color: #1a1a1a; }
.vhead-band .vname { width: 101px; }
.vrow { display: flex; height: 13.300px; line-height: 15px; }
.vrow .vname { width: 122px; padding-left: 38px; }
.vfp { display: flex; align-items: center; }
.vrow .vfp { padding-left: 23px; }
.vfp .arr-r { margin: 0 8px 0 0; }
.vval { display: flex; align-items: center; }
.vrow .vval { padding-left: 0; }

.time-head { height: 20px; margin-top: 0; background: #cbc7cb; display: flex; align-items: center; padding-left: 3px; padding-top: 1px; font-size: 11.5px; flex: none; }
.time-head .float-btn { margin-top: -1px; }
.time-row { height: 27px; display: flex; align-items: flex-start; padding: 7px 0 0 11px; flex: none; white-space: nowrap; }
.t-lab { line-height: 23px; margin-right: 7px; }
.t-field { width: 126px; height: 20px; background: #fff; border: 1px solid #d5d1cc; line-height: 19px; padding-left: 3px; border-radius: 2px; margin-right: 6px; font-size: 11.500px; }
.t-exp { margin-left: auto; margin-right: 17px; display: flex; align-items: center; line-height: 23px; }
.cb-plain { margin-right: 5px; }

.detach { position: absolute; left: 1804px; top: 7px; width: 88px; height: 49px; background: #f3f3f3; border: 0; border-radius: 5px; display: flex; align-items: center; justify-content: center; padding: 0; }
.detach svg { width: 28px; height: 28px; }

.x-task { position: absolute; left: 243px; top: 773px; height: 26px; display: flex; align-items: center; font: 11.500px "DejaVu Sans", sans-serif; color: #ddd; white-space: nowrap; }
.x-ic { width: 19px; height: 14px; margin-right: 7px; margin-top: 4px; }
.x-desk { font-weight: 700; width: 71px; letter-spacing: .3px; color: #d6d6d6; }
.x-win { width: 133px; height: 26px; background: #0e1214; border: 1px solid #555; border-radius: 3px; display: flex; align-items: center; padding-left: 13px; color: #ccc; font: 11.500px "Roboto", sans-serif; }
.x-logo { font: 700 14px "Liberation Serif", serif; margin-right: 3px; }
.x-logo small { font-size: 8px; vertical-align: 3px; }
.x-clock { position: absolute; left: 1555px; top: 773px; width: 120px; text-align: center; font: 10.500px/12px "DejaVu Sans", sans-serif; color: #d8d8d8; display: flex; flex-direction: column; }
.x-clock b { color: #eee; }
.x-dots { position: absolute; left: 1875px; top: 774px; width: 22px; height: 20px; display: grid; grid-template-columns: repeat(3, 4px); grid-template-rows: repeat(3, 4px); gap: 4.500px; justify-content: space-between; }
.x-dots i { background: #1e88e5; }
.x-dots i:nth-child(1) { grid-area: 1 / 3; }
.x-dots i:nth-child(2) { grid-area: 2 / 2; }
.x-dots i:nth-child(3) { grid-area: 2 / 3; }
.x-dots i:nth-child(4) { grid-area: 3 / 1; }
.x-dots i:nth-child(5) { grid-area: 3 / 2; }
.x-dots i:nth-child(6) { grid-area: 3 / 3; }

/* Dock */
.dock { height: 76px; background: #1f2937; display: flex; align-items: center; flex: none; }
.dock-apps { display: flex; width: 661px; padding-left: 1px; }
.dock-slot { width: 110px; height: 76px; display: flex; align-items: center; justify-content: center; position: relative; flex: none; }
.badge { position: absolute; left: 66px; top: 0; width: 27px; height: 28px; border-radius: 50%; background: #1e88e5; color: #fff; font: 700 14px/28px "Roboto", sans-serif; text-align: center; }
.d-term { width: 30px; height: 24px; margin-top: 1px; }
.d-code { width: 30px; height: 20px; margin-top: 1px; }
.d-note { width: 26px; height: 30px; margin-top: 1px; }
.d-cube { width: 26px; height: 28px; margin-top: 1px; }
.d-desk { width: 29px; height: 29px; margin-top: 1px; }
.d-book { width: 32px; height: 24px; margin-top: 1px; }
.dock-label { margin-left: 424px; display: flex; align-items: center; font: 700 16.500px "Noto Sans", sans-serif; color: #a8a8a8; letter-spacing: .7px; white-space: nowrap; }
.d-info { width: 28px; height: 28px; margin-right: 10px; }
.dock-right { margin-left: auto; display: flex; padding-left: 1px; }
.help { font: 700 38px "Roboto", sans-serif; color: #fff; padding-top: 4px; }
.d-home { width: 28px; height: 24px; margin-top: 1px; }

/* Windows taskbar */
.taskbar { height: 50px; background: linear-gradient(90deg, #1a1a1a, #1f1f1f 40%, #2e2a27 75%, #322e2a); display: flex; align-items: center; position: relative; flex: none; }
.start { width: 60px; height: 50px; display: flex; align-items: center; justify-content: center; }
.search { width: 430px; height: 50px; background: #f0f0f0; border: 1px solid #c9c9c9; border-width: 1px 1px 0; display: flex; align-items: center; font: 19px "Roboto", sans-serif; color: #222; padding-left: 15px; }
.s-ic { width: 20px; height: 20px; margin-right: 14px; }
.tb-apps { display: flex; margin-left: -1px; }
.tb-slot { width: 61.900px; height: 50px; display: flex; align-items: center; justify-content: center; position: relative; }
.tv { margin-right: 2px; }
.edge { margin-right: 1px; }
.gear { margin-left: -2px; }
.tb-active { background: #565656; border-bottom: 3px solid #76b9ed; margin-left: 1px; }
.tb-active svg { margin-top: 3px; }
.tb-run::after { content: ""; position: absolute; left: 5px; right: 5px; bottom: 0; height: 3px; background: #76b9ed; }
.mail-count { position: absolute; left: 26px; top: 23px; width: 35px; height: 24px; border-radius: 12px; background: #1f2937; border: 1px solid #8a8a8a; color: #fff; font: 700 16px/22px "Roboto", sans-serif; text-align: center; }
.mail-count small { font-weight: 400; font-size: 14px; }
.wps { width: 27px; height: 32px; background: #2a7de8; border-radius: 4px; color: #fff; font: 700 20px/32px "Roboto", sans-serif; text-align: center; }
.tray { position: absolute; left: 1573px; top: 0; height: 50px; width: 340px; color: #eee; display: flex; align-items: center; }
.tr-chev { width: 18px; height: 10px; }
.tr-cam { width: 16px; height: 20px; margin-left: 14px; }
.tr-bat { width: 20px; height: 12px; margin-left: 12px; position: relative; display: block; }
.tr-bat svg { width: 20px; height: 12px; }
.tr-bat i { position: absolute; right: 0; top: 5px; width: 11px; height: 11px; border-radius: 50%; background: #15803d; }
.tr-vol { width: 21px; height: 16px; margin-left: 10px; }
.tr-cloud { width: 20px; height: 14px; margin-left: 9px; }
.tr-eng { font: 14px "Roboto", sans-serif; margin-left: 13px; }
.tr-time { width: 80px; margin-left: 15px; text-align: center; font: 15px/23px "Roboto", sans-serif; display: flex; flex-direction: column; padding-top: 2px; }
.tr-note { position: relative; display: block; width: 20px; height: 17px; margin-left: 23px; margin-top: -4px; }
.tr-note svg { width: 20px; height: 17px; }
.tr-note b { position: absolute; left: 8px; top: 8px; width: 22px; height: 22px; border-radius: 50%; background: #3a3a3a; border: 1px solid #999; font: 700 12px/20px "Roboto", sans-serif; text-align: center; }
.show-desk { position: absolute; left: 1914px; top: 0; width: 1px; height: 50px; background: #777; }
```
